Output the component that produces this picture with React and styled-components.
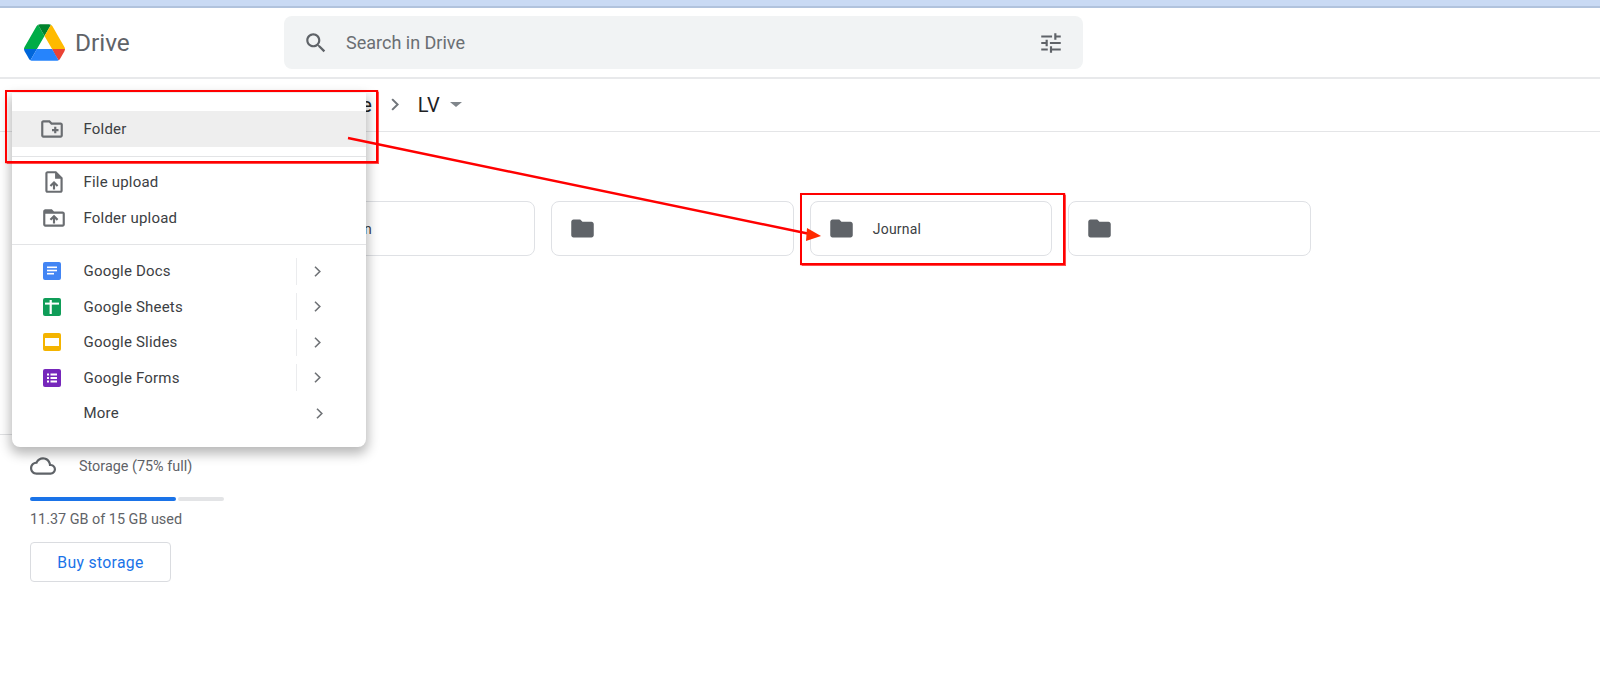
import React from 'react';
import styled, { createGlobalStyle } from 'styled-components';

const GlobalStyle = createGlobalStyle`
  html, body { margin: 0; padding: 0; background: #fff; }
  body { font-family: Roboto, "Liberation Sans", sans-serif; color: #202124; overflow: hidden; }
`;

const paths = {
  search: 'M15.5 14h-.79l-.28-.27C15.41 12.59 16 11.11 16 9.5 16 5.91 13.09 3 9.5 3S3 5.91 3 9.5 5.91 16 9.5 16c1.61 0 3.09-.59 4.23-1.57l.27.28v.79l5 4.99L20.49 19l-4.99-5zm-6 0C7.01 14 5 11.99 5 9.5S7.01 5 9.5 5 14 7.01 14 9.5 11.99 14 9.5 14z',
  tune: 'M3 17v2h6v-2H3zM3 5v2h10V5H3zm10 16v-2h8v-2h-8v-2h-2v6h2zM7 9v2H3v2h4v2h2V9H7zm14 4v-2H11v2h10zm-6-4h2V7h4V5h-4V3h-2v6z',
  folder: 'M10 4H4c-1.1 0-1.99.9-1.99 2L2 18c0 1.1.9 2 2 2h16c1.1 0 2-.9 2-2V8c0-1.1-.9-2-2-2h-8l-2-2z',
  newFolder: 'M20 6h-8l-2-2H4c-1.1 0-2 .9-2 2v12c0 1.1.9 2 2 2h16c1.1 0 2-.9 2-2V8c0-1.1-.9-2-2-2zm0 12H4V6h5.17l2 2H20v10zm-8-4h2v2h2v-2h2v-2h-2v-2h-2v2h-2v2z',
  fileUpload: 'M14 2H6c-1.1 0-1.99.9-1.99 2L4 20c0 1.1.89 2 1.99 2H18c1.1 0 2-.9 2-2V8l-6-6zm4 18H6V4h7v5h5v11zM8 15.01l1.41 1.41L11 14.84V19h2v-4.16l1.59 1.59L16 15.01 12.01 11z',
  folderUpload: 'M20 6h-8l-2-2H4c-1.1 0-1.99.9-1.99 2L2 18c0 1.1.9 2 2 2h16c1.1 0 2-.9 2-2V8c0-1.1-.9-2-2-2zm0 12H4V8h16v10zM8 13.01l1.41 1.41L11 12.84V17h2v-4.16l1.59 1.59L16 13.01 12.01 9 8 13.01z',
  cloud: 'M19.35 10.04C18.67 6.59 15.64 4 12 4 9.11 4 6.6 5.64 5.35 8.04 2.34 8.36 0 10.91 0 14c0 3.31 2.69 6 6 6h13c2.76 0 5-2.24 5-5 0-2.64-2.05-4.78-4.65-4.96zM19 18H6c-2.21 0-4-1.79-4-4s1.79-4 4-4h.71C7.37 7.69 9.48 6 12 6c3.04 0 5.5 2.46 5.5 5.5v.5H19c1.66 0 3 1.34 3 3s-1.34 3-3 3z',
};

const Icon = ({ d, size = 24, color = '#5f6368' }) => (
  <svg width={size} height={size} viewBox="0 0 24 24" fill={color} style={{ display: 'block', flex: 'none' }}>
    <path d={d} />
  </svg>
);

const DriveLogo = () => (
  <svg width="41" height="37" viewBox="0 0 87.3 78" style={{ display: 'block', flex: 'none' }}>
    <path d="m6.6 66.85 3.85 6.65c.8 1.4 1.95 2.5 3.3 3.3l13.75-23.8h-27.5c0 1.55.4 3.1 1.2 4.5z" fill="#0066da" />
    <path d="m43.65 25-13.75-23.8c-1.35.8-2.5 1.9-3.3 3.3l-25.4 44a9.06 9.06 0 0 0 -1.2 4.5h27.5z" fill="#00ac47" />
    <path d="m73.55 76.8c1.35-.8 2.5-1.9 3.3-3.3l1.6-2.75 7.65-13.25c.8-1.4 1.2-2.95 1.2-4.5h-27.502l5.852 11.5z" fill="#ea4335" />
    <path d="m43.65 25 13.75-23.8c-1.35-.8-2.9-1.2-4.5-1.2h-18.5c-1.6 0-3.15.45-4.5 1.2z" fill="#00832d" />
    <path d="m59.8 53h-32.3l-13.75 23.8c1.35.8 2.9 1.2 4.5 1.2h50.8c1.6 0 3.15-.45 4.5-1.2z" fill="#2684fc" />
    <path d="m73.4 26.5-12.7-22c-.8-1.4-1.95-2.5-3.3-3.3l-13.75 23.8 16.15 28h27.45c0-1.55-.4-3.1-1.2-4.5z" fill="#ffba00" />
  </svg>
);

const AppTile = ({ color, children }) => (
  <svg width="18" height="18" viewBox="0 0 18 18" style={{ display: 'block', flex: 'none' }}>
    <rect width="18" height="18" rx="2" fill={color} />
    {children}
  </svg>
);

const DocsIcon = () => (
  <AppTile color="#4285f4">
    <rect x="4" y="4.5" width="10" height="1.6" fill="#fff" />
    <rect x="4" y="7.7" width="10" height="1.6" fill="#fff" />
    <rect x="4" y="10.9" width="7" height="1.6" fill="#fff" />
  </AppTile>
);

const SheetsIcon = () => (
  <AppTile color="#0f9d58">
    <rect x="2" y="4.6" width="14" height="2" fill="#fff" />
    <rect x="6.6" y="2" width="2.2" height="14" fill="#fff" />
  </AppTile>
);

const SlidesIcon = () => (
  <AppTile color="#f4b400">
    <rect x="2" y="5" width="14" height="8" fill="#fff" />
  </AppTile>
);

const FormsIcon = () => (
  <AppTile color="#7627bb">
    {[4.5, 8, 11.5].map((y) => (
      <g key={y} fill="#fff">
        <rect x="4" y={y} width="2" height="2" />
        <rect x="7.5" y={y} width="6.5" height="2" />
      </g>
    ))}
  </AppTile>
);

const Chevron = ({ width = 7, height = 11, color = '#6f7276', stroke = 1.6 }) => (
  <svg width={width} height={height} viewBox="0 0 7 11" fill="none" style={{ display: 'block', flex: 'none' }}>
    <path d="M1 .8 5.8 5.5 1 10.2" stroke={color} strokeWidth={stroke} />
  </svg>
);

const Page = styled.div`
  position: relative;
  width: 1600px;
  height: 698px;
  overflow: hidden;
  background: #fff;
`;

const BrowserStrip = styled.div`
  height: 6px;
  background: #c9daf4;
  border-bottom: 2px solid #b1c3dd;
`;

const Header = styled.header`
  display: flex;
  align-items: center;
  height: 69px;
  padding-left: 24px;
  border-bottom: 2px solid #e8e9eb;
`;

const Brand = styled.div`
  display: flex;
  align-items: center;
  gap: 10px;
  width: 260px;
  flex: none;
`;

const BrandName = styled.span`
  font-size: 24.4px;
  color: #5f6368;
`;

const SearchBar = styled.div`
  display: flex;
  align-items: center;
  width: 799px;
  height: 53px;
  box-sizing: border-box;
  padding: 0 19px;
  background: #f1f3f4;
  border-radius: 8px;
`;

const SearchPlaceholder = styled.span`
  flex: 1;
  margin-left: 17px;
  font-size: 18px;
  color: #6a6e72;
`;

const Breadcrumb = styled.div`
  display: flex;
  align-items: center;
  height: 53px;
  box-sizing: border-box;
  padding: 0 0 1px 295px;
  border-bottom: 1px solid #e4e5e7;
  font-size: 20px;
  color: #202124;
`;

const Crumb = styled.span`
  margin: ${(p) => p.$margin || '0'};
`;

const Caret = styled.span`
  width: 0;
  height: 0;
  margin-left: 10px;
  border-left: 6px solid transparent;
  border-right: 6px solid transparent;
  border-top: 5px solid #80868b;
`;

const Main = styled.main`
  display: flex;
`;

const Sidebar = styled.aside`
  width: 293px;
  flex: none;
  padding-top: 302px;
`;

const SideRule = styled.div`
  height: 1px;
  background: #e0e1e3;
`;

const StorageBlock = styled.div`
  display: flex;
  flex-direction: column;
  align-items: flex-start;
  padding: 19px 0 0 30px;
`;

const StorageHead = styled.div`
  display: flex;
  align-items: center;
  gap: 23px;
  height: 24px;
  font-size: 14.4px;
  color: #5f6368;
`;

const Meter = styled.div`
  display: flex;
  gap: 2px;
  width: 194px;
  height: 4px;
  margin-top: 19px;
`;

const MeterFill = styled.div`
  height: 100%;
  border-radius: 2px;
  background: ${(p) => p.$color};
`;

const StorageNote = styled.div`
  margin-top: 10px;
  font-size: 14.4px;
  line-height: 18px;
  color: #5f6368;
`;

const BuyButton = styled.button`
  width: 141px;
  height: 40px;
  margin-top: 13px;
  background: #fff;
  border: 1px solid #dadce0;
  border-radius: 4px;
  font: 400 15.8px Roboto, sans-serif;
  letter-spacing: 0.3px;
  color: #1a73e8;
`;

const Content = styled.section`
  padding-top: 69px;
`;

const CardRow = styled.div`
  display: flex;
  gap: 16px;
`;

const Card = styled.div`
  display: flex;
  align-items: center;
  gap: 18px;
  width: 242.4px;
  height: 55px;
  box-sizing: border-box;
  padding-left: 17px;
  border: 1px solid #dfe1e5;
  border-radius: 8px;
`;

const CardName = styled.span`
  font-size: 14px;
  letter-spacing: 0.2px;
  color: #3c4043;
`;

const Menu = styled.div`
  position: absolute;
  left: 12px;
  top: 93px;
  width: 354px;
  height: 354px;
  box-sizing: border-box;
  padding: 18px 0;
  background: #fff;
  border-radius: 0 0 8px 8px;
  box-shadow: 0 5px 12px 2px rgba(0, 0, 0, 0.28);
`;

const MenuRow = styled.div`
  display: flex;
  align-items: center;
  height: 35.6px;
  padding-left: 27px;
  background: ${(p) => (p.$active ? '#eeeeee' : 'transparent')};
  font-size: 15px;
  letter-spacing: 0.2px;
  color: #3c4043;
`;

const MenuIcon = styled.span`
  display: flex;
  align-items: center;
  justify-content: center;
  width: 26px;
  margin-left: ${(p) => p.$shift || 0}px;
  margin-right: ${(p) => 18.5 - (p.$shift || 0)}px;
`;

const MenuLabel = styled.span`
  flex: 1;
`;

const SubmenuEnd = styled.span`
  display: flex;
  align-items: center;
  width: 70px;
  height: 27px;
  box-sizing: border-box;
  border-left: 1px solid ${(p) => (p.$bare ? 'transparent' : '#ebecee')};
  padding-left: ${(p) => (p.$bare ? '19px' : '17px')};
`;

const MenuRule = styled.div`
  height: 1px;
  margin: ${(p) => p.$margin};
  background: #e3e4e6;
`;

const Highlight = styled.div`
  position: absolute;
  box-sizing: border-box;
  border: 2px solid #ff0000;
  box-shadow: 0 0 1px 0.5px rgba(255, 0, 0, 0.7);
  left: ${(p) => p.$x}px;
  top: ${(p) => p.$y}px;
  width: ${(p) => p.$w}px;
  height: ${(p) => p.$h}px;
`;

const ArrowLayer = styled.svg`
  position: absolute;
  left: 0;
  top: 0;
  pointer-events: none;
`;

const uploads = [
  { label: 'File upload', d: paths.fileUpload },
  { label: 'Folder upload', d: paths.folderUpload },
];

const apps = [
  { label: 'Google Docs', Tile: DocsIcon },
  { label: 'Google Sheets', Tile: SheetsIcon },
  { label: 'Google Slides', Tile: SlidesIcon },
  { label: 'Google Forms', Tile: FormsIcon },
];

const App = () => (
  <Page>
    <GlobalStyle />
    <BrowserStrip />
    <Header>
      <Brand>
        <DriveLogo />
        <BrandName>Drive</BrandName>
      </Brand>
      <SearchBar>
        <Icon d={paths.search} size={26} />
        <SearchPlaceholder>Search in Drive</SearchPlaceholder>
        <Icon d={paths.tune} size={26} />
      </SearchBar>
    </Header>
    <Breadcrumb>
      <Crumb>My Drive</Crumb>
      <Crumb $margin="0 19px">
        <Chevron width={8} height={13} color="#70757a" stroke={1.8} />
      </Crumb>
      <Crumb>LV</Crumb>
      <Caret />
    </Breadcrumb>
    <Main>
      <Sidebar>
        <SideRule />
        <StorageBlock>
          <StorageHead>
            <Icon d={paths.cloud} size={26} />
            <span>Storage (75% full)</span>
          </StorageHead>
          <Meter>
            <MeterFill $color="#1a73e8" style={{ width: '75%' }} />
            <MeterFill $color="#e3e4e6" style={{ flex: 1 }} />
          </Meter>
          <StorageNote>11.37 GB of 15 GB used</StorageNote>
          <BuyButton>Buy storage</BuyButton>
        </StorageBlock>
      </Sidebar>
      <Content>
        <CardRow>
          <Card>
            <Icon d={paths.folder} size={27} />
            <CardName>un</CardName>
          </Card>
          <Card>
            <Icon d={paths.folder} size={27} />
          </Card>
          <Card>
            <Icon d={paths.folder} size={27} />
            <CardName>Journal</CardName>
          </Card>
          <Card>
            <Icon d={paths.folder} size={27} />
          </Card>
        </CardRow>
      </Content>
    </Main>

    <Menu>
      <MenuRow $active>
        <MenuIcon>
          <Icon d={paths.newFolder} size={26} color="#6a6d71" />
        </MenuIcon>
        <MenuLabel>Folder</MenuLabel>
      </MenuRow>
      <MenuRule $margin="9px 0 8px" />
      {uploads.map((row) => (
        <MenuRow key={row.label}>
          <MenuIcon $shift={2}>
            <Icon d={row.d} size={26} color="#6a6d71" />
          </MenuIcon>
          <MenuLabel>{row.label}</MenuLabel>
        </MenuRow>
      ))}
      <MenuRule $margin="8.5px 0 8px" />
      {apps.map(({ label, Tile }) => (
        <MenuRow key={label}>
          <MenuIcon>
            <Tile />
          </MenuIcon>
          <MenuLabel>{label}</MenuLabel>
          <SubmenuEnd>
            <Chevron />
          </SubmenuEnd>
        </MenuRow>
      ))}
      <MenuRow>
        <MenuIcon />
        <MenuLabel>More</MenuLabel>
        <SubmenuEnd $bare>
          <Chevron />
        </SubmenuEnd>
      </MenuRow>
    </Menu>

    <Highlight $x={5} $y={90} $w={373} $h={73} />
    <Highlight $x={800} $y={193} $w={265} $h={72} />
    <ArrowLayer width="1600" height="698" viewBox="0 0 1600 698">
      <line x1="348" y1="138" x2="810" y2="234" stroke="#ff0000" strokeWidth="2.5" />
      <polygon points="821,236 807,228 806,241" fill="#ff2a00" />
    </ArrowLayer>
  </Page>
);

export default App;
